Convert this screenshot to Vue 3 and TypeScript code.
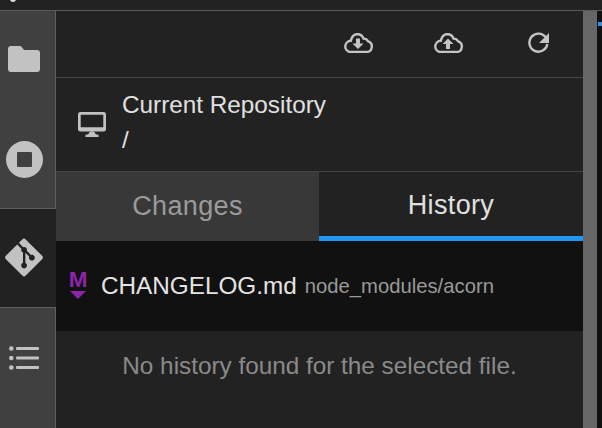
<script setup lang="ts">
import { ref } from 'vue';

type RailIcon = 'folder' | 'stop' | 'git' | 'list';

const railItems: { id: RailIcon; active?: boolean }[] = [
  { id: 'folder' },
  { id: 'stop' },
  { id: 'git', active: true },
  { id: 'list' },
];

const activeTab = ref('History');
const tabs = ['Changes', 'History'];
</script>

<template>
  <div class="window">
    <div class="top-bar"><span class="top-dot"></span></div>
    <div class="body">
      <nav class="rail">
        <div
          v-for="item in railItems"
          :key="item.id"
          class="rail-item"
          :class="[`rail-item--${item.id}`, { 'rail-item--active': item.active }]"
        >
          <svg v-if="item.id === 'folder'" class="icon-folder" viewBox="0 0 32 26">
            <path d="M3 0h8.500a3 3 0 0 1 2.400 1.200L16 4h13a3 3 0 0 1 3 3v16a3 3 0 0 1-3 3H3a3 3 0 0 1-3-3V3a3 3 0 0 1 3-3z" />
          </svg>
          <svg v-else-if="item.id === 'stop'" class="icon-stop" viewBox="0 0 37 37">
            <path fill-rule="evenodd" d="M18.500 0a18.500 18.500 0 1 1 0 37a18.500 18.500 0 1 1 0-37zM12 11a1 1 0 0 0-1 1v13a1 1 0 0 0 1 1h13a1 1 0 0 0 1-1V12a1 1 0 0 0-1-1z" />
          </svg>
          <svg v-else-if="item.id === 'git'" class="icon-git" viewBox="0 0 448 512">
            <path d="M439.55 236.05L244 40.45a28.87 28.87 0 0 0-40.81 0l-40.66 40.63 51.52 51.52c27.06-9.14 52.68 16.77 43.39 43.68l49.66 49.66c34.23-11.8 61.18 31 35.47 56.69-26.49 26.49-70.21-2.87-56-37.34L240.22 199v121.85c25.3 12.54 22.26 41.85 9.08 55a34.34 34.34 0 0 1-48.55 0c-17.57-17.6-11.07-46.91 11.25-56v-123c-20.8-8.51-24.6-30.74-18.64-45L142.57 101 8.45 235.14a28.86 28.86 0 0 0 0 40.81l195.61 195.6a28.86 28.86 0 0 0 40.8 0l194.69-194.69a28.86 28.86 0 0 0 0-40.81z" />
          </svg>
          <svg v-else class="icon-list" viewBox="0 0 30 24">
            <circle cx="2.300" cy="2.500" r="2.300" />
            <circle cx="2.300" cy="12" r="2.300" />
            <circle cx="2.300" cy="21.500" r="2.300" />
            <rect x="7" y="1" width="23" height="3" rx="1" />
            <rect x="7" y="10.500" width="23" height="3" rx="1" />
            <rect x="7" y="20" width="23" height="3" rx="1" />
          </svg>
        </div>
      </nav>

      <main class="panel">
        <div class="toolbar">
          <svg class="tool-icon tool-cloud" viewBox="0 0 30 20">
            <path class="cloud-line" d="M6.500 19h17a5.500 5.500 0 0 0 1.600-10.700A5 5 0 0 0 20.500 5.600 7 7 0 0 0 15 1a7 7 0 0 0-6.500 4.800Q8 7 7.800 7.800A5.700 5.700 0 0 0 6.500 19z" />
            <path d="M13 5.500h4v5h3.500L15 16 9.500 10.500H13z" />
          </svg>
          <svg class="tool-icon tool-cloud" viewBox="0 0 30 20">
            <path class="cloud-line" d="M6.500 19h17a5.500 5.500 0 0 0 1.600-10.700A5 5 0 0 0 20.500 5.600 7 7 0 0 0 15 1a7 7 0 0 0-6.500 4.800Q8 7 7.800 7.800A5.700 5.700 0 0 0 6.500 19z" />
            <path d="M13 16h4v-5h3.500L15 5.500 9.500 11H13z" />
          </svg>
          <svg class="tool-icon tool-refresh" viewBox="0 0 21 21">
            <path class="cloud-line" d="M17.800 5.500A9 9 0 1 0 19.300 12" />
            <path d="M21 1v10H11z" />
          </svg>
        </div>

        <div class="repo">
          <svg class="icon-monitor" viewBox="0 0 28 25">
            <path fill-rule="evenodd" d="M2.500 0h23A2.500 2.500 0 0 1 28 2.500v14.500a2.500 2.500 0 0 1-2.500 2.500h-23A2.500 2.500 0 0 1 0 17v-14.500A2.500 2.500 0 0 1 2.500 0zM2.700 2.700v12.500h22.600V2.700z" />
            <path d="M12 19.500h4l2 3h2.500V25h-13v-2.500H10z" />
          </svg>
          <div class="repo-text">
            <div>Current Repository</div>
            <div class="repo-path">/</div>
          </div>
        </div>

        <div class="tabs">
          <div
            v-for="tab in tabs"
            :key="tab"
            class="tab"
            :class="{ 'tab--active': tab === activeTab }"
          >
            {{ tab }}
          </div>
        </div>

        <div class="file-row">
          <span class="file-badge">
            <span class="file-badge-letter">M</span>
            <span class="file-badge-arrow"></span>
          </span>
          <span class="file-name">CHANGELOG.md</span>
          <span class="file-dir">node_modules/acorn</span>
        </div>

        <div class="empty">No history found for the selected file.</div>
      </main>

      <div class="scrollbar"></div>
      <div class="edge"><span class="edge-mark"></span></div>
    </div>
  </div>
</template>

<style>
html,
body {
  margin: 0;
  background: #222;
}
</style>

<style scoped>
.window {
  display: flex;
  flex-direction: column;
  width: 602px;
  height: 428px;
  overflow: hidden;
  font-family: 'Liberation Sans', Arial, sans-serif;
  color: #e0e0e0;
  background: #222;
}

.top-bar {
  display: flex;
  flex: none;
  height: 10px;
  padding-left: 10px;
  background: #222;
  border-bottom: 1px solid #5a5a5a;
}

.top-dot {
  width: 6px;
  height: 6px;
  margin-top: -4px;
  background: #ddd;
  border-radius: 50%;
}

.body {
  display: flex;
  flex: 1;
  min-height: 0;
}

.rail {
  display: flex;
  flex: none;
  flex-direction: column;
  width: 55px;
  background: #404040;
  border-right: 1px solid #5f5f5f;
}

.rail-item {
  display: flex;
  flex: none;
  align-items: center;
  justify-content: center;
  box-sizing: border-box;
  height: 98px;
  padding-right: 7px;
}

.rail-item svg {
  fill: #c2c2c2;
}

.rail-item--folder {
  padding-bottom: 2px;
}

.rail-item--stop {
  height: 99px;
  padding-top: 2px;
}

.rail-item--git {
  height: 100px;
  margin-right: -1px;
  padding-right: 8px;
  padding-bottom: 2px;
  background: #222;
  border-top: 1px solid #5f5f5f;
  border-bottom: 1px solid #5f5f5f;
}

.rail-item--list {
  flex: 1;
  padding-bottom: 20px;
}

.icon-folder {
  width: 32px;
  height: 26px;
}

.icon-stop {
  width: 37px;
  height: 37px;
}

.icon-git {
  width: 38px;
  height: 43px;
}

.icon-list {
  width: 30px;
  height: 24px;
}

.panel {
  display: flex;
  flex: 1;
  flex-direction: column;
  min-width: 0;
  background: #222;
}

.toolbar {
  display: flex;
  flex: none;
  gap: 60px;
  align-items: center;
  justify-content: flex-end;
  box-sizing: border-box;
  height: 67px;
  padding-right: 34px;
  padding-bottom: 3px;
  border-bottom: 1px solid #444;
}

.tool-icon {
  fill: #c4c4c4;
}

.tool-cloud {
  width: 30px;
  height: 20px;
}

.tool-refresh {
  width: 21px;
  height: 21px;
  margin-left: 5px;
}

.cloud-line {
  fill: none;
  stroke: #c4c4c4;
  stroke-width: 2.400;
}

.repo {
  display: flex;
  flex: none;
  gap: 16px;
  align-items: center;
  box-sizing: border-box;
  height: 94px;
  padding-bottom: 5px;
  padding-left: 22px;
  font-size: 24.300px;
  line-height: 35px;
  border-bottom: 1px solid #444;
}

.icon-monitor {
  width: 28px;
  height: 25px;
  margin-top: 5px;
  fill: #c2c2c2;
}

.tabs {
  display: flex;
  flex: none;
  height: 69px;
}

.tab {
  display: flex;
  flex: 1 1 264px;
  align-items: center;
  justify-content: center;
  box-sizing: border-box;
  font-size: 27px;
  letter-spacing: 0.350px;
  color: #9b9b9b;
  background: #383838;
}

.tab:first-child {
  flex: 0 0 263px;
}

.tab--active {
  padding-top: 2px;
  color: #e0e0e0;
  background: #222;
  border-bottom: 5px solid #2196f3;
}

.file-row {
  display: flex;
  flex: none;
  align-items: center;
  height: 90px;
  padding-left: 13px;
  background: #111;
}

.file-badge {
  display: flex;
  flex: none;
  flex-direction: column;
  align-items: center;
  width: 18px;
  margin-top: -4px;
  margin-right: 14px;
}

.file-badge-letter {
  font-size: 22.500px;
  font-weight: 700;
  line-height: 20px;
  color: #8e24aa;
}

.file-badge-arrow {
  width: 0;
  height: 0;
  margin-top: 1px;
  border-top: 8px solid #8e24aa;
  border-right: 8px solid transparent;
  border-left: 8px solid transparent;
}

.file-name {
  font-size: 24.300px;
  color: #e4e4e4;
}

.file-dir {
  margin-left: 8px;
  font-size: 20.250px;
  color: #9a9a9a;
}

.empty {
  padding-top: 21px;
  font-size: 24.300px;
  line-height: 28px;
  color: #8a8a8a;
  text-align: center;
}

.scrollbar {
  flex: none;
  width: 14px;
  background: #666;
}

.edge {
  flex: none;
  width: 5px;
  padding-top: 11px;
  background: #111;
}

.edge-mark {
  display: block;
  height: 4px;
  margin-left: 1px;
  background: #2196f3;
}
</style>
